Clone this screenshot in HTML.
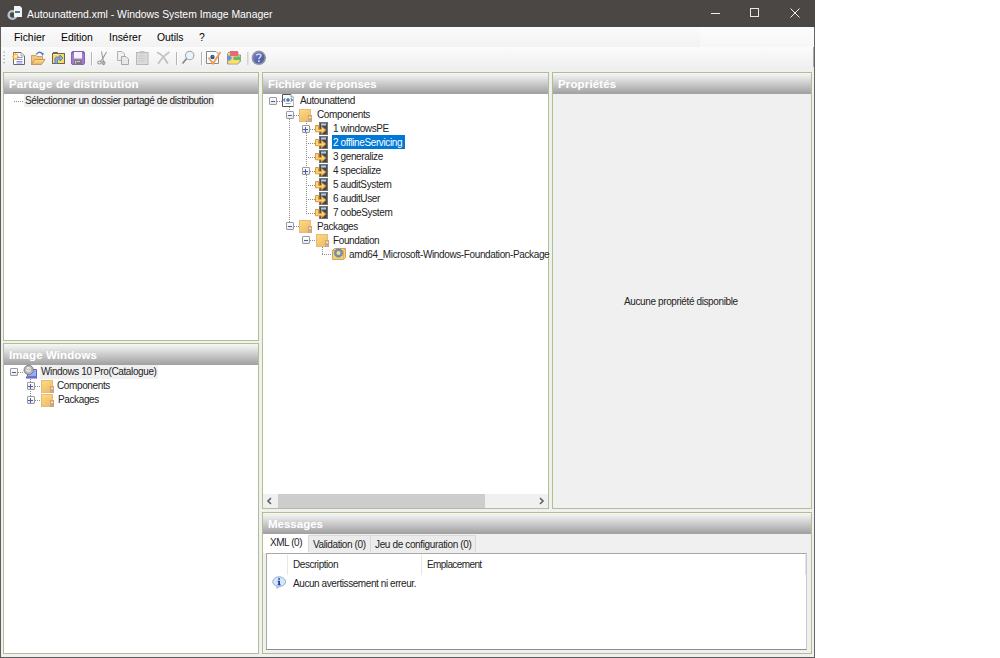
<!DOCTYPE html>
<html><head><meta charset="utf-8"><style>
*{margin:0;padding:0;box-sizing:border-box}
html,body{width:1000px;height:658px;background:#fff;overflow:hidden;position:relative;font-family:"Liberation Sans",sans-serif}
.a{position:absolute}
svg{display:block}
#win{left:0;top:0;width:815px;height:658px;background:#f0f0f0;border-left:1px solid #5c5c5c;border-right:1px solid #666;border-bottom:1px solid #5c5c5c}
#title{left:0;top:0;width:815px;height:27px;background:#4a4745}
#title .t{left:27px;top:8.5px;color:#fff;font-size:10.4px;white-space:nowrap}
#menubar{left:1px;top:27px;width:699px;height:20px;background:linear-gradient(#fbfbfb,#f2f2f2)}
#menubar2{left:700px;top:27px;width:114px;height:20px;background:linear-gradient(#fcfcfc,#f7f7f7)}
#toolbar{left:1px;top:47px;width:813px;height:23px;background:linear-gradient(#fbfbfb,#efefef)}
.menu{top:32px;font-size:10.4px;color:#000;white-space:nowrap}
.panel{border:1px solid #aec090;background:#fff}
.hdr{left:0;top:0;right:0;height:21px;background:linear-gradient(#f6f6f6 0px,#ececec 3px,#a3a3a3 20px);color:#fff;font-weight:bold;font-size:11.5px;padding-left:5px;padding-top:1px;line-height:20px;white-space:nowrap;text-shadow:0 0 1px #ccc}
.tx{font-size:10px;letter-spacing:-0.38px;color:#242424;white-space:nowrap;line-height:13px}
.bx{width:8px;height:8px;border:1px solid #9a9a9a;background:linear-gradient(#fff,#e8e8e8);border-radius:1px}
.bx::before{content:"";position:absolute;left:1px;top:3px;width:4px;height:1px;background:#4a5cb8}
.bx.p::before{left:0px;width:5px}
.bx.p::after{content:"";position:absolute;left:2px;top:1px;width:1px;height:5px;background:#4a5cb8}
.dh{height:1px;background:repeating-linear-gradient(90deg,#8c8c8c 0 1px,transparent 1px 2px)}
.dv{width:1px;background:repeating-linear-gradient(180deg,#8c8c8c 0 1px,transparent 1px 2px)}
.sep{width:1px;height:14px;background:#b8b8b8;top:52px}
</style></head><body>

<svg width="0" height="0" style="position:absolute">
<defs>
<linearGradient id="gF" x1="0" y1="0" x2="0.6" y2="1"><stop offset="0" stop-color="#fddc7c"/><stop offset="1" stop-color="#efbd6e"/></linearGradient>
<symbol id="fold" viewBox="0 0 14 13">
  <rect x="0.5" y="0.5" width="11" height="12" fill="url(#gF)" stroke="#e6b97c"/>
  <rect x="9.5" y="6.5" width="3" height="6" fill="#edc27e" stroke="#d2a374"/>
  <rect x="10.5" y="8" width="1" height="1.5" fill="#fff"/><rect x="10.5" y="9.5" width="1" height="2" fill="#5a86d0"/>
</symbol>
<symbol id="comp" viewBox="0 0 13 13">
  <rect x="4.5" y="0.5" width="8" height="12" fill="#4e4e4e" stroke="#747474"/>
  <rect x="6" y="1.5" width="5" height="2" fill="#a6d0fa"/>
  <path d="M6 5h5M6 7h5M6 9h5M6 11h5" stroke="#333" stroke-width="0.6"/>
  <path d="M0.5 3.5H3.5V7.5H6.5V4.5L10.8 8L6.5 11.8V9.8H0.5Z" fill="#fdd36e" stroke="#dd9a3c" stroke-width="1"/>
</symbol>
<symbol id="doc" viewBox="0 0 12 13">
  <path d="M11.5 3V12.5H0.5V0.5H9" fill="#fff" stroke="#555" stroke-width="1"/><path d="M11.5 3V12.5" stroke="#bbb"/>
  <path d="M9 0.5V3H11.5" fill="#ddd" stroke="#888" stroke-width="0.8"/>
  <path d="M3.3 4.3L1.6 6L3.3 7.7M8.7 4.3L10.4 6L8.7 7.7" fill="none" stroke="#6060b0" stroke-width="1.1"/>
  <circle cx="6" cy="6" r="1.8" fill="#4a60d8"/><circle cx="6.3" cy="5.3" r="0.9" fill="#2cb84a"/>
  <rect x="3.5" y="9" width="5" height="1" fill="#8ab8a8"/>
</symbol>
<symbol id="pkg" viewBox="0 0 14 12">
  <path d="M0.5 2.5L2.5 0.5H13.5V9.5L11.5 11.5H0.5Z" fill="#f6d36a" stroke="#d7a05e" stroke-width="1"/>
  <path d="M11.5 11.5V2.5H0.5M11.5 2.5L13.5 0.5" fill="none" stroke="#e0a860" stroke-width="0.8"/>
  <circle cx="6.5" cy="5" r="4.2" fill="#6e8fc0" stroke="#5a7ab0" stroke-width="1" stroke-dasharray="1.2 0.9"/>
  <circle cx="6.5" cy="5" r="2" fill="#fbe06a"/>
</symbol>
<symbol id="globe" viewBox="0 0 15 15">
  <path d="M5.5 5.5H14.5V12.5H5.5Z" fill="#98acf6" stroke="#5c68c8" stroke-width="1"/>
  <rect x="4" y="12.5" width="11" height="2" fill="#4e5cc0"/>
  <rect x="5" y="12.6" width="9" height="0.8" fill="#8898e8"/>
  <circle cx="6.7" cy="6" r="4.7" fill="#b4b4b4" stroke="#7a7a7a" stroke-width="0.9"/>
  <circle cx="6.4" cy="5.4" r="2.6" fill="#e4e4e4"/>
  <path d="M4 4.5Q6 7 9 5" fill="none" stroke="#a0a0a0" stroke-width="0.6"/>
</symbol>
<symbol id="info" viewBox="0 0 15 13">
  <path d="M7 0.8C10.5 0.8 13.5 3 13.5 5.8C13.5 8.6 10.5 10.6 7 10.6L5 12.5V10.2C2.5 9.5 0.8 7.8 0.8 5.8C0.8 3 3.5 0.8 7 0.8Z" fill="#d4e6f8" stroke="#7ea6d4" stroke-width="0.9"/>
  <rect x="6.3" y="2.2" width="1.6" height="1.5" fill="#1a2a9a"/>
  <path d="M5.5 4.8H7.9V8.4H8.8V9.2H5.5V8.4H6.3V5.6H5.5Z" fill="#1a2a9a"/>
</symbol>
</defs></svg>

<div id="win" class="a"></div>
<div id="title" class="a">
  <svg class="a" style="left:7px;top:5px" width="16" height="16" viewBox="0 0 16 16">
    <circle cx="5.5" cy="10" r="3.9" fill="none" stroke="#b4c4d4" stroke-width="2.4"/>
    <circle cx="5.5" cy="10" r="1.3" fill="#4a4745"/>
    <path d="M7 1H13L15 3V12H7Z" fill="#f4f4f4"/>
    <rect x="8" y="6" width="2" height="2" fill="#1a9a3a"/><rect x="10" y="6" width="3" height="2" fill="#4a6ae8"/>
  </svg>
  <div class="a t">Autounattend.xml - Windows System Image Manager</div>
  <div class="a" style="left:711px;top:13px;width:9px;height:1px;background:#f0f0f0"></div>
  <div class="a" style="left:750px;top:8px;width:9px;height:9px;border:1px solid #e8e8e8"></div>
  <svg class="a" style="left:790px;top:8px" width="10" height="10" viewBox="0 0 10 10"><path d="M0.5 0.5L9.5 9.5M9.5 0.5L0.5 9.5" stroke="#eee" stroke-width="1"/></svg>
</div>
<div id="menubar" class="a"></div><div id="menubar2" class="a"></div>
<div class="a menu" style="left:14px">Fichier</div>
<div class="a menu" style="left:61px">Edition</div>
<div class="a menu" style="left:109px">Insérer</div>
<div class="a menu" style="left:157px">Outils</div>
<div class="a menu" style="left:199px">?</div>
<div id="toolbar" class="a"></div>
<div class="a" style="left:813px;top:47px;width:1px;height:20px;background:#a8a8a8"></div>
<svg class="a" style="left:0;top:47px" width="272" height="23" viewBox="0 47 272 23">
<defs>
<radialGradient id="gSun" cx="0.5" cy="0.5" r="0.5"><stop offset="0" stop-color="#fff6a0"/><stop offset="0.5" stop-color="#f8c040"/><stop offset="1" stop-color="#e88a30"/></radialGradient>
<linearGradient id="gOF" x1="0" y1="0" x2="0" y2="1"><stop offset="0" stop-color="#fde38a"/><stop offset="1" stop-color="#e8b060"/></linearGradient>
<linearGradient id="gHelp" x1="0" y1="0" x2="1" y2="1"><stop offset="0" stop-color="#8088d8"/><stop offset="0.6" stop-color="#5560b4"/><stop offset="1" stop-color="#4a7890"/></linearGradient>
</defs>
<!-- grip -->
<g fill="#9a9a9a"><rect x="3.5" y="51.5" width="1.2" height="1.2"/><rect x="3.5" y="55" width="1.2" height="1.2"/><rect x="3.5" y="58.5" width="1.2" height="1.2"/><rect x="3.5" y="62" width="1.2" height="1.2"/></g>
<!-- new doc -->
<path d="M13.5 52.5H21L24.5 56V64.5H13.5Z" fill="#fff" stroke="#6a6a6a"/>
<path d="M21 52.5V56H24.5" fill="#e8e8e8" stroke="#9a9a9a" stroke-width="0.8"/>
<path d="M16.5 57.5h6M16.5 59.5h6M16.5 61.5h6M16.5 63h6" stroke="#8a90e0" stroke-width="1"/>
<path d="M15.5 52.5L16.3 54.5L18.3 53.7L17.5 55.7L19.5 56.5L17.5 57.3L18.3 59.3L16.3 58.5L15.5 60.5L14.7 58.5L12.7 59.3L13.5 57.3L11.5 56.5L13.5 55.7L12.7 53.7L14.7 54.5Z" fill="#f4a040"/>
<circle cx="15.5" cy="56.5" r="1.8" fill="#fff080"/>
<!-- open folder -->
<path d="M31.5 55.5H36L37 56.5H42.5V59.5H35L31.5 64.5Z" fill="#f0c878" stroke="#c89868" stroke-width="0.9"/>
<path d="M31.5 64.5L34.5 59.5H45L41.5 64.5Z" fill="url(#gOF)" stroke="#c89060" stroke-width="0.9"/>
<path d="M36.5 54.5C37 52 40.5 51.5 42 53.5" fill="none" stroke="#4a7ab8" stroke-width="1.3"/>
<path d="M41 52.5L44 53.5L42.5 56Z" fill="#4a7ab8"/>
<!-- folder arrow -->
<rect x="52.5" y="53.5" width="12" height="10" fill="#fbd860" stroke="#6e6450"/>
<path d="M53 52.5H57.5L58.5 53.5" fill="none" stroke="#6e6450"/>
<rect x="53.5" y="54" width="4" height="1" fill="#e8f0d0"/>
<path d="M55 63.5V59C55 57.5 56 57 57.5 57H60V55L63 58L60 61V59H58C57.5 59 57.5 59.5 57.5 60V63.5Z" fill="#8ab0e8" stroke="#4a70b0" stroke-width="0.8"/>
<!-- save -->
<rect x="71.5" y="51.5" width="13" height="13" rx="1.5" fill="#a47ad0" stroke="#8a60b8"/>
<rect x="74" y="52" width="8" height="6.5" fill="#f4f2fc"/>
<rect x="74" y="60" width="8" height="4.5" fill="#7a7a7a"/>
<rect x="75" y="61" width="1.2" height="2.5" fill="#cfcfcf"/><rect x="77" y="61" width="3" height="1" fill="#cfcfcf"/>
<rect x="72.3" y="52.3" width="1" height="1" fill="#555"/><rect x="82.7" y="52.3" width="1" height="1" fill="#555"/>
<!-- sep -->
<rect x="91" y="52" width="1" height="13" fill="#b4b4b4"/><rect x="92" y="52" width="1" height="13" fill="#fff"/>
<!-- scissors (disabled) -->
<g stroke="#9a9a9a" fill="none" stroke-width="1.1">
<path d="M101.5 51.5L103 59.5L104 64"/><path d="M106.5 52L102.5 59L100 62"/>
<ellipse cx="99.5" cy="62.5" rx="1.8" ry="1.5"/><ellipse cx="103.5" cy="63" rx="1.4" ry="1.6"/>
</g>
<!-- copy -->
<path d="M117.5 51.5H122L124.5 54V60.5H117.5Z" fill="#f0f0f0" stroke="#b0b0b0"/>
<path d="M121.5 56.5H126L128.5 59V64.5H121.5Z" fill="#e8e8e8" stroke="#a8a8a8"/>
<!-- paste -->
<rect x="136.5" y="52.5" width="11.5" height="12" fill="#dcdcdc" stroke="#b8b8b8"/>
<rect x="140" y="51" width="4.5" height="2.5" fill="#c4c4c4"/>
<path d="M138.5 56h7M138.5 58.5h7M138.5 61h7" stroke="#c8c8c8"/>
<!-- delete -->
<path d="M157 52.5C161 54 164 57 165.5 60C166.5 62 167.5 63 168 63.5" fill="none" stroke="#c0c0c0" stroke-width="1.8"/>
<path d="M169.5 52C165 55 161 59 158 64" fill="none" stroke="#c4c4c4" stroke-width="1.8"/>
<!-- sep -->
<rect x="176" y="52" width="1" height="13" fill="#b4b4b4"/><rect x="177" y="52" width="1" height="13" fill="#fff"/>
<!-- magnifier -->
<circle cx="189.7" cy="55.5" r="4.2" fill="#eaf2fc" stroke="#9aa4b0" stroke-width="1.1"/>
<path d="M186.7 58.5L182.5 63.5" stroke="#8a8a8a" stroke-width="1.8"/>
<!-- sep -->
<rect x="201" y="52" width="1" height="13" fill="#b4b4b4"/><rect x="202" y="52" width="1" height="13" fill="#fff"/>
<!-- validate -->
<path d="M206.5 51.5H216L218.5 54V63.5H206.5Z" fill="#fff" stroke="#8a8a8a"/>
<circle cx="212.5" cy="57" r="2.2" fill="#2a4ab8"/><circle cx="212.8" cy="56.3" r="1" fill="#3a9a4a"/>
<path d="M208.5 57.5L213 63.5L220.5 52" fill="none" stroke="#f0a050" stroke-width="2"/>
<!-- config -->
<path d="M227.5 53.5L229 52H238V55H240.5V61L238 64H227.5Z" fill="#f2d870" stroke="#6a6a6a" stroke-width="0.6"/>
<rect x="230" y="51" width="8" height="5" fill="#e86878"/>
<rect x="233.5" y="56.5" width="7" height="5" fill="#6ab870"/>
<path d="M227 55.5H230L232 58L230 60.5H227Z" fill="#6a90e0"/>
<path d="M229.5 62.5L233 60H240L238 63.5H229Z" fill="#f8e070"/>
<!-- sep -->
<rect x="247" y="52" width="1.5" height="13" fill="#d4d4d4"/>
<!-- help -->
<circle cx="258.8" cy="57.8" r="6.5" fill="url(#gHelp)" stroke="#999" stroke-width="1.4"/>
<path d="M256.6 55.6C256.6 53.8 261 53.6 261 55.8C261 57.3 258.9 57.4 258.9 59.2" fill="none" stroke="#e4e4f4" stroke-width="1.25"/>
<rect x="258.1" y="60.4" width="1.6" height="1.5" fill="#f0f0ff"/>
</svg>
<div class="a panel" style="left:3px;top:72px;width:256px;height:269px"><div class="a hdr" style="letter-spacing:0.2px">Partage de distribution</div></div>
<div class="a panel" style="left:3px;top:343px;width:256px;height:311px"><div class="a hdr" style="letter-spacing:0.09px">Image Windows</div></div>
<div class="a panel" style="left:262px;top:72px;width:287px;height:437px"><div class="a hdr">Fichier de réponses</div></div>
<div class="a panel" style="left:552px;top:72px;width:260px;height:437px;background:#f0f0f0"><div class="a hdr" style="letter-spacing:0.15px">Propriétés</div></div>
<div class="a panel" style="left:262px;top:512px;width:550px;height:142px;background:#f0f0f0"><div class="a hdr">Messages</div></div>
<div class="a dh" style="left:14px;top:101px;width:9px"></div>
<div class="a" style="left:24px;top:94px;width:190px;height:13px;background:#f0f0f0"></div>
<div class="a tx" style="left:25px;top:94px;">Sélectionner un dossier partagé de distribution</div>
<div class="a bx" style="left:10px;top:368px"></div>
<div class="a dh" style="left:18px;top:372px;width:5px"></div>
<svg class="a" style="left:22px;top:364px" width="15" height="15"><use href="#globe"/></svg>
<div class="a dv" style="left:30px;top:379px;height:17px"></div>
<div class="a bx p" style="left:27px;top:382px"></div>
<div class="a dh" style="left:35px;top:386px;width:6px"></div>
<svg class="a" style="left:41px;top:380px" width="14" height="13"><use href="#fold"/></svg>
<div class="a bx p" style="left:27px;top:396px"></div>
<div class="a dh" style="left:35px;top:400px;width:6px"></div>
<svg class="a" style="left:41px;top:394px" width="14" height="13"><use href="#fold"/></svg>
<div class="a" style="left:40px;top:365px;width:118px;height:14px;background:#f0f0f0"></div>
<div class="a tx" style="left:41px;top:365px;">Windows 10 Pro(Catalogue)</div>
<div class="a tx" style="left:57px;top:379px;">Components</div>
<div class="a tx" style="left:58px;top:393px;">Packages</div>
<div class="a bx" style="left:269px;top:97px"></div>
<div class="a dh" style="left:277px;top:101px;width:5px"></div>
<svg class="a" style="left:282px;top:94px" width="12" height="13"><use href="#doc"/></svg>
<div class="a dv" style="left:289px;top:107px;height:115px"></div>
<div class="a bx" style="left:286px;top:111px"></div>
<div class="a dh" style="left:294px;top:115px;width:5px"></div>
<svg class="a" style="left:299px;top:109px" width="14" height="13"><use href="#fold"/></svg>
<div class="a dv" style="left:306px;top:121px;height:91px"></div>
<div class="a bx p" style="left:302px;top:125px"></div>
<div class="a dh" style="left:310px;top:129px;width:5px"></div>
<svg class="a" style="left:315px;top:122px" width="13" height="13"><use href="#comp"/></svg>
<div class="a tx" style="left:333px;top:122px;">1 windowsPE</div>
<div class="a dh" style="left:306px;top:143px;width:9px"></div>
<svg class="a" style="left:315px;top:136px" width="13" height="13"><use href="#comp"/></svg>
<div class="a" style="left:332px;top:135px;width:73px;height:14px;background:#0078d7"></div>
<div class="a tx" style="left:333px;top:136px;color:#fff">2 offlineServicing</div>
<div class="a dh" style="left:306px;top:157px;width:9px"></div>
<svg class="a" style="left:315px;top:150px" width="13" height="13"><use href="#comp"/></svg>
<div class="a tx" style="left:333px;top:150px;">3 generalize</div>
<div class="a bx p" style="left:302px;top:167px"></div>
<div class="a dh" style="left:310px;top:171px;width:5px"></div>
<svg class="a" style="left:315px;top:164px" width="13" height="13"><use href="#comp"/></svg>
<div class="a tx" style="left:333px;top:164px;">4 specialize</div>
<div class="a dh" style="left:306px;top:185px;width:9px"></div>
<svg class="a" style="left:315px;top:178px" width="13" height="13"><use href="#comp"/></svg>
<div class="a tx" style="left:333px;top:178px;">5 auditSystem</div>
<div class="a dh" style="left:306px;top:199px;width:9px"></div>
<svg class="a" style="left:315px;top:192px" width="13" height="13"><use href="#comp"/></svg>
<div class="a tx" style="left:333px;top:192px;">6 auditUser</div>
<div class="a dh" style="left:306px;top:213px;width:9px"></div>
<svg class="a" style="left:315px;top:206px" width="13" height="13"><use href="#comp"/></svg>
<div class="a tx" style="left:333px;top:206px;">7 oobeSystem</div>
<div class="a bx" style="left:286px;top:222px"></div>
<div class="a dh" style="left:294px;top:226px;width:5px"></div>
<svg class="a" style="left:299px;top:220px" width="14" height="13"><use href="#fold"/></svg>
<div class="a bx" style="left:302px;top:236px"></div>
<div class="a dh" style="left:310px;top:240px;width:6px"></div>
<svg class="a" style="left:316px;top:234px" width="14" height="13"><use href="#fold"/></svg>
<div class="a dv" style="left:322px;top:247px;height:7px"></div>
<div class="a dh" style="left:322px;top:254px;width:10px"></div>
<svg class="a" style="left:332px;top:248px" width="14" height="12"><use href="#pkg"/></svg>
<div class="a tx" style="left:300px;top:94px;">Autounattend</div>
<div class="a tx" style="left:317px;top:108px;">Components</div>
<div class="a tx" style="left:317px;top:220px;">Packages</div>
<div class="a tx" style="left:333px;top:234px;">Foundation</div>
<div class="a tx" style="left:349px;top:248px;">amd64_Microsoft-Windows-Foundation-Package</div>
<div class="a tx" style="left:624px;top:295px;">Aucune propriété disponible</div>
<div class="a" style="left:263px;top:534px;width:46px;height:19px;background:#fff"></div>
<div class="a" style="left:308px;top:535px;width:63px;height:17px;background:#ececec;border:1px solid #d9d9d9;border-bottom:none"></div>
<div class="a" style="left:370px;top:535px;width:106px;height:17px;background:#ececec;border:1px solid #d9d9d9;border-bottom:none"></div>
<div class="a tx" style="left:270px;top:536px;letter-spacing:-0.45px">XML (0)</div>
<div class="a tx" style="left:313px;top:538px;letter-spacing:-0.4px">Validation (0)</div>
<div class="a tx" style="left:375px;top:538px;letter-spacing:-0.36px">Jeu de configuration (0)</div>
<div class="a" style="left:266px;top:553px;width:541px;height:97px;background:#fff;border:1px solid #a8a8a8;border-right-color:#c8c8c8;border-bottom-color:#8a8a9a"></div>
<div class="a" style="left:287px;top:555px;width:1px;height:20px;background:#e8e8e8"></div>
<div class="a" style="left:421px;top:555px;width:1px;height:20px;background:#e8e8e8"></div>
<div class="a tx" style="left:293px;top:558px;letter-spacing:-0.45px">Description</div>
<div class="a tx" style="left:427px;top:558px;letter-spacing:-0.6px">Emplacement</div>
<div class="a tx" style="left:293px;top:577px;letter-spacing:-0.42px">Aucun avertissement ni erreur.</div>
<div class="a" style="left:805px;top:555px;width:1px;height:20px;background:#e4e4e4"></div>
<svg class="a" style="left:272px;top:576px" width="15" height="13"><use href="#info"/></svg>
<div class="a" style="left:263px;top:494px;width:285px;height:14px;background:#f0f0f0"></div>
<div class="a" style="left:278px;top:494px;width:207px;height:14px;background:#cdcdcd"></div>
<svg class="a" style="left:266px;top:497px" width="8" height="8" viewBox="0 0 8 8"><path d="M5 1L2 4L5 7" fill="none" stroke="#606060" stroke-width="1.6"/></svg>
<svg class="a" style="left:537px;top:497px" width="8" height="8" viewBox="0 0 8 8"><path d="M3 1L6 4L3 7" fill="none" stroke="#606060" stroke-width="1.6"/></svg>
</body></html>
